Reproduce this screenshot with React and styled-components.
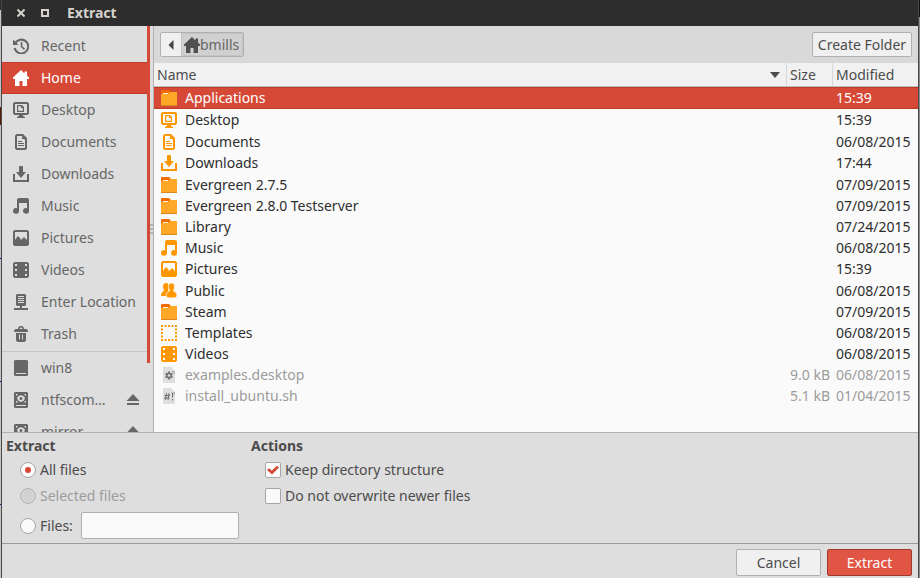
import React, { useState } from "react";
import styled, { createGlobalStyle, css } from "styled-components";

const color = {
  accent: "#d64937",
  accentEdge: "#c03a29",
  panel: "#dedede",
  toolbar: "#d9d9d9",
  edge: "#b0b0b0",
  text: "#4c4c4c",
  soft: "#666666",
  muted: "#9c9c9c",
  base: "#fafafa",
  orange: "#ff9800",
};

const GlobalStyle = createGlobalStyle`
  * { box-sizing: border-box; }
  body {
    margin: 0;
    background:
      linear-gradient(
        #2b2b2b 0 10px, #c4c4c4 10px 107px, #5a1a08 107px 125px, #c4c4c4 125px 258px,
        #1414a8 258px 259px, #c4c4c4 259px 381px, #1414a8 381px 382px, #c4c4c4 382px 504px,
        #38107a 504px 505px, #c4c4c4 505px) left / 1px 100% no-repeat,
      linear-gradient(#101010 0 17px, #8c8c8c 17px);
    font-family: "Noto Sans", sans-serif;
    font-size: 14px;
    line-height: 20px;
    color: ${color.text};
  }
  button, input { font: inherit; color: inherit; margin: 0; }
  h1, h2 { margin: 0; font-size: 14px; font-weight: 700; }
`;

const Window = styled.div`
  display: flex;
  flex-direction: column;
  height: 100vh;
  margin: 0 1px;
  border: solid #484848;
  border-width: 0 1px;
  background: ${color.panel};
  overflow: hidden;
`;

const TitleBar = styled.header`
  display: flex;
  align-items: center;
  height: 26px;
  flex: none;
  padding: 0 11px;
  gap: 8px;
  background: #2d2d2d;
  color: #d6d3cd;
  h1 { margin-left: 6px; }
`;

const WindowButton = styled.button`
  display: flex;
  align-items: center;
  justify-content: center;
  width: 16px;
  height: 16px;
  padding: 0;
  border: 0;
  background: none;
`;

const Browser = styled.div`
  display: flex;
  flex: 1 1 0;
  min-height: 0;
  border-bottom: 1px solid ${color.edge};
`;

const Sidebar = styled.nav`
  display: flex;
  flex: none;
  width: 152px;
  border-right: 1px solid ${color.edge};
  overflow: hidden;
`;

const PlaceList = styled.ul`
  flex: 1;
  min-width: 0;
  margin: 0;
  padding: 4px 0 0;
  list-style: none;
`;

const Place = styled.li`
  display: flex;
  height: 32px;
  color: ${(p) => (p.$active ? "#ffffff" : color.soft)};
  background: ${(p) => (p.$active ? color.accent : "transparent")};
  box-shadow: ${(p) =>
    p.$active ? `inset 0 1px ${color.accentEdge}, inset 0 -1px ${color.accentEdge}` : "none"};
  ${(p) =>
    p.$divided &&
    css`
      height: 33px;
      margin-top: 1px;
      border-top: 1px solid #c6c6c6;
    `}
`;

const PlaceLink = styled.a`
  display: flex;
  flex: 1;
  min-width: 0;
  align-items: center;
  gap: 12px;
  padding-left: 11px;
  color: inherit;
  text-decoration: none;
  white-space: nowrap;
`;

const EjectButton = styled.button`
  flex: none;
  width: 36px;
  padding: 0 6px 0 14px;
  border: 0;
  background: none;
  svg { display: block; }
`;

const ScrollThumb = styled.div`
  flex: none;
  width: 3px;
  height: 337px;
  background: ${color.accent};
`;

const Grip = styled.div`
  flex: none;
  align-self: center;
  width: 3px;
  height: 10px;
  background: repeating-linear-gradient(#b4b4b4 0 2px, transparent 2px 4px);
`;

const Main = styled.main`
  display: flex;
  flex: 1;
  min-width: 0;
  flex-direction: column;
  background: ${color.base};
  overflow: hidden;
`;

const Toolbar = styled.div`
  display: flex;
  flex: none;
  align-items: center;
  justify-content: space-between;
  height: 37px;
  padding: 0 6px;
  background: ${color.toolbar};
`;

const buttonBox = css`
  border: 1px solid ${color.edge};
  border-radius: 2px;
  background: #f0f0f0;
`;

const PathBar = styled.div`
  display: flex;
  height: 25px;
  ${buttonBox}
  overflow: hidden;
`;

const PathButton = styled.button`
  display: flex;
  align-items: center;
  justify-content: center;
  padding: 0 4px 0 3px;
  min-width: 20px;
  border: 0;
  color: ${color.soft};
  background: ${(p) => (p.$current ? "#d0d0d0" : "transparent")};
  box-shadow: ${(p) => (p.$current ? "inset 0 0 0 1px #c4c4c4" : "none")};
`;

const Button = styled.button`
  ${buttonBox}
  height: ${(p) => (p.$dialog ? 27 : 25)}px;
  min-width: ${(p) => (p.$dialog ? 85 : 100)}px;
  padding: 0 3px;
  white-space: nowrap;
  ${(p) =>
    p.$primary &&
    css`
      color: #ffffff;
      background: #e15545;
      border-color: #9f3a2d;
    `}
`;

const FileTable = styled.table`
  width: 100%;
  table-layout: fixed;
  border-collapse: separate;
  border-spacing: 0;
  white-space: nowrap;
  th, td { padding: 0 3px; text-align: left; }
`;

const HeadCell = styled.th`
  width: ${(p) => p.$width || "auto"};
  height: 24px;
  font-weight: 400;
  background: #f1f1f1;
  border-bottom: 1px solid #bdbdbd;
  border-left: ${(p) => (p.$width ? "1px solid #d8d8d8" : "0")};
`;

const SortButton = styled.button`
  display: flex;
  align-items: center;
  justify-content: space-between;
  width: 100%;
  height: 23px;
  padding: 0;
  padding-right: ${(p) => (p.$sorted ? 3 : 0)}px;
  border: 0;
  background: none;
`;

const FileRow = styled.tr`
  height: ${(p) => (p.$tall ? 22 : 21)}px;
  color: ${(p) => (p.$selected ? "#ffffff" : p.$muted ? color.muted : "#2e2e2e")};
  td {
    background: ${(p) => (p.$selected ? color.accent : "transparent")};
    box-shadow: ${(p) =>
      p.$selected ? `inset 0 1px ${color.accentEdge}, inset 0 -1px ${color.accentEdge}` : "none"};
  }
  td:nth-child(2) { text-align: right; padding: 0 2px 0 0; }
  td:nth-child(3) { padding-left: 4px; }
`;

const FileName = styled.div`
  display: flex;
  align-items: center;
  gap: 8px;
  height: 20px;
  padding-left: 4px;
`;

const Options = styled.div`
  display: grid;
  flex: none;
  grid-template-columns: 245px 1fr;
  padding: 3px 4px 2px;
`;

const OptionGroup = styled.section`
  display: flex;
  flex-direction: column;
  gap: 2px;
`;

const OptionRow = styled.div`
  display: flex;
  align-items: center;
  gap: 4px;
  height: ${(p) => (p.$field ? 31 : 24)}px;
  padding-left: 14px;
  color: ${(p) => (p.$disabled ? color.muted : "inherit")};
`;

const choice = css`
  appearance: none;
  display: grid;
  place-items: center;
  flex: none;
  width: 16px;
  height: 16px;
  border: 1px solid #a6a6a6;
  background: ${color.base};
`;

const Radio = styled.input.attrs({ type: "radio" })`
  ${choice}
  border-radius: 50%;
  &:disabled { background: #d2d2d2; border-color: #b4b4b4; }
  &:checked::after {
    content: "";
    width: 6px;
    height: 6px;
    border-radius: 50%;
    background: ${color.accent};
  }
`;

const CheckBox = styled.input.attrs({ type: "checkbox" })`
  ${choice}
  border-radius: 2px;
  &:checked::after {
    content: "";
    width: 12px;
    height: 10px;
    background: ${color.accent};
    clip-path: polygon(0 50%, 17% 32%, 40% 56%, 82% 8%, 100% 26%, 42% 96%);
  }
`;

const TextField = styled.input`
  width: 158px;
  height: 27px;
  margin-left: 4px;
  padding: 0 6px;
  border: 1px solid ${color.edge};
  border-radius: 2px;
  background: ${color.base};
`;

const ActionBar = styled.footer`
  display: flex;
  flex: none;
  justify-content: flex-end;
  gap: 6px;
  padding: 5px 6px 2px;
  border-top: 1px solid #9a9a9a;
`;

const IconSvg = styled.svg`
  flex: none;
  display: block;
  color: ${(p) => p.$tint || "inherit"};
`;

const shapes = {
  recent: (
    <g fill="none" stroke="currentColor">
      <path d="M2.2 5.4A6.9 6.9 0 1 1 1.6 10" strokeWidth="2" />
      <path d="M8.5 4v4.5l3 2.8" strokeWidth="1.6" />
      <path d="M0 1.5V7h5.5z" fill="currentColor" stroke="none" />
    </g>
  ),
  home: <path d="M8 0 0 7.5V9h2v7h4.5v-5h3v5H14V9h2V7.5l-2-2V1.5h-2.5v2z" />,
  desktop: (
    <>
      <path fillRule="evenodd" d="M1.5 0h13L16 1.5v10L14.5 13h-13L0 11.5v-10zM2 2v9h12V2z" />
      <path fillRule="evenodd" d="M4 3h5l2 2v5H4zM5.2 4.2v4.6h4.6V6H8V4.2z" />
      <path d="M6 13h4v1l2 1v1H4v-1l2-1z" />
    </>
  ),
  documents: (
    <>
      <path fillRule="evenodd" d="M3.5 0H10l4 4v10.5L12.5 16h-9L2 14.5v-13zM4 2v12h8V6L9 2z" />
      <path d="M5 7h4v1H5zM5 9h6v1H5zM5 11h6v1H5zM9 2v3h3z" />
    </>
  ),
  downloads: <path d="M6 1q0-1 1-1h2q1 0 1 1v5h3l-5 6-5-6h3zM0 8h2v6h12V8h2v8H0z" />,
  music: <path d="M4 2q0-2 2-2h8q2 0 2 2v11a3 2.8 0 1 1-2-2.7V5H6v8a3 2.8 0 1 1-2-2.7z" />,
  pictures: (
    <path
      fillRule="evenodd"
      d="M1.5 0h13L16 1.5v13l-1.5 1.5h-13L0 14.5v-13zM2 2v8l2-3 1-1 2 2 1 2 1-1 2-2 1 1 2 2V2z"
    />
  ),
  videos: (
    <path
      fillRule="evenodd"
      d="M1.5 0h13L16 1.5v13l-1.5 1.5h-13L0 14.5v-13zM2 2v2h2V2zM2 7v2h2V7zM2 12v2h2v-2zM12 2v2h2V2zM12 7v2h2V7zM12 12v2h2v-2z"
    />
  ),
  network: (
    <path
      fillRule="evenodd"
      d="M4 0h8l1 1v10l-1 1H9v2h6v2H1v-2h6v-2H4l-1-1V1zM5 2v1h6V2zM5 4v1h6V4zM5 6v1h6V6zM5 8v1h6V8z"
    />
  ),
  trash: (
    <path
      fillRule="evenodd"
      d="M5 3q0-3 3-3t3 3h2q2 0 2 3H1q0-3 2-3zM6.5 3h3q0-1.5-1.5-1.5T6.5 3zM3 7h10v7.5L11.5 16h-7L3 14.5zM6 8.5v5h1v-5zM9 8.5v5h1v-5z"
    />
  ),
  drive: <path fillRule="evenodd" d="M2 0h12l1 1v14l-1 1H2l-1-1V1zM3 13v1h10v-1z" />,
  disk: (
    <path
      fillRule="evenodd"
      d="M2 0h12l1 1v14l-1 1H2l-1-1V1zM3 13v1h10v-1zM3 2v1.5h1.5V2zM11.5 2v1.5H13V2zM3 9v1.5h1.5V9zM11.5 9v1.5H13V9zM5 4.5 4 6l1 2.5L8 10l3-1.5L12 6l-1-1.5L8 3zM8 5a1.5 1.5 0 1 1 0 3 1.5 1.5 0 0 1 0-3z"
    />
  ),
  eject: <path d="M8 2 1.5 9h13zM2 11h12v2H2z" />,
  folder: (
    <>
      <path fill="#ef6c00" d="M0 1q0-1 1-1h7l2 2v3H0z" />
      <path fill="#ffa726" d="M0 4h7l2-2h7v13H0z" />
      <path fill="#fff3e0" d="M2 3h5v1H2z" />
      <path fill="#d98919" d="M0 15h16v1H0z" />
    </>
  ),
  people: (
    <>
      <path d="M5 0q3 0 3 4L7 7l1 2-2 4H0q0-4 3-5L2 4q0-4 3-4z" />
      <path
        d="M10.5 0q3.5 0 3.2 4l-1.2 4q3.5 1 3.5 5 0 2-5.5 2T5 13q0-4 3.5-5L7.3 4Q7 0 10.5 0z"
        stroke={color.base}
        strokeWidth=".7"
      />
    </>
  ),
  templates: (
    <path
      fill="none"
      stroke="currentColor"
      strokeWidth="2"
      strokeDasharray="2 1.5"
      d="M0 1h16M0 15h16M1 3.5v9M15 3.5v9"
    />
  ),
  config: (
    <>
      <path fill="#dedede" d="M2 0h8l4 4v12H2z" />
      <path fill="#b8b8b8" d="M10 4h4v4z" />
      <path stroke="#777" strokeWidth="2" fill="none" d="M8 4.5v8M4.5 6.5l7 4M11.5 6.5l-7 4" />
      <circle cx="8" cy="8.5" r="3" fill="#777" />
      <circle cx="8" cy="8.5" r="1.2" fill="#dedede" />
    </>
  ),
  script: (
    <>
      <path fill="#dedede" d="M2 0h8l4 4v12H2z" />
      <path fill="#b8b8b8" d="M10 4h4v4z" />
      <path
        stroke="#707070"
        fill="none"
        d="M5.5 5 4.5 12M8 5 7 12M3.5 7.5h5.5M3 10h5.5M11.5 5v4.5M11.5 11v1.5"
      />
    </>
  ),
};

function Icon({ name, tint }) {
  return (
    <IconSvg width="16" height="16" viewBox="0 0 16 16" fill="currentColor" $tint={tint} aria-hidden="true">
      {shapes[name]}
    </IconSvg>
  );
}

const places = [
  { name: "Recent", icon: "recent" },
  { name: "Home", icon: "home", active: true },
  { name: "Desktop", icon: "desktop" },
  { name: "Documents", icon: "documents" },
  { name: "Downloads", icon: "downloads" },
  { name: "Music", icon: "music" },
  { name: "Pictures", icon: "pictures" },
  { name: "Videos", icon: "videos" },
  { name: "Enter Location", icon: "network" },
  { name: "Trash", icon: "trash" },
  { name: "win8", icon: "drive", divided: true },
  { name: "ntfscom…", icon: "disk", eject: true },
  { name: "mirror", icon: "disk", eject: true },
];

const files = [
  { name: "Applications", icon: "folder", date: "15:39", tall: true },
  { name: "Desktop", icon: "desktop", date: "15:39", tall: true },
  { name: "Documents", icon: "documents", date: "06/08/2015" },
  { name: "Downloads", icon: "downloads", date: "17:44", tall: true },
  { name: "Evergreen 2.7.5", icon: "folder", date: "07/09/2015" },
  { name: "Evergreen 2.8.0 Testserver", icon: "folder", date: "07/09/2015" },
  { name: "Library", icon: "folder", date: "07/24/2015" },
  { name: "Music", icon: "music", date: "06/08/2015" },
  { name: "Pictures", icon: "pictures", date: "15:39", tall: true },
  { name: "Public", icon: "people", date: "06/08/2015" },
  { name: "Steam", icon: "folder", date: "07/09/2015" },
  { name: "Templates", icon: "templates", date: "06/08/2015" },
  { name: "Videos", icon: "videos", date: "06/08/2015" },
  { name: "examples.desktop", icon: "config", size: "9.0 kB", date: "06/08/2015", muted: true },
  { name: "install_ubuntu.sh", icon: "script", size: "5.1 kB", date: "01/04/2015", muted: true },
];

export default function App() {
  const [selected, setSelected] = useState("Applications");
  const [scope, setScope] = useState("all");
  return (
    <>
      <GlobalStyle />
      <Window>
        <TitleBar>
          <WindowButton aria-label="Close">
            <svg width="8" height="8" viewBox="0 0 8 8" stroke="currentColor" strokeWidth="2">
              <path d="M.5.5l7 7M7.5.5l-7 7" />
            </svg>
          </WindowButton>
          <WindowButton aria-label="Maximize">
            <svg width="8" height="8" viewBox="0 0 8 8" fill="none" stroke="currentColor" strokeWidth="2">
              <path d="M1 1h6v6H1z" />
            </svg>
          </WindowButton>
          <h1>Extract</h1>
        </TitleBar>

        <Browser>
          <Sidebar aria-label="Places">
            <PlaceList>
              {places.map((place) => (
                <Place key={place.name} $active={place.active} $divided={place.divided}>
                  <PlaceLink href="#">
                    <Icon name={place.icon} />
                    {place.name}
                  </PlaceLink>
                  {place.eject && (
                    <EjectButton aria-label={`Eject ${place.name}`}>
                      <Icon name="eject" />
                    </EjectButton>
                  )}
                </Place>
              ))}
            </PlaceList>
            <ScrollThumb />
            <Grip />
          </Sidebar>

          <Main>
            <Toolbar>
              <PathBar>
                <PathButton aria-label="Back">
                  <svg width="6" height="10" viewBox="0 0 6 10" fill="#444">
                    <path d="M5.5 0v10L.5 5z" />
                  </svg>
                </PathButton>
                <PathButton $current>
                  <Icon name="home" tint="#505050" />
                  bmills
                </PathButton>
              </PathBar>
              <Button>Create Folder</Button>
            </Toolbar>
            <FileTable>
              <thead>
                <tr>
                  <HeadCell>
                    <SortButton $sorted>
                      Name
                      <svg width="10" height="6" viewBox="0 0 10 6" fill={color.text}>
                        <path d="M0 0h10L5 6z" />
                      </svg>
                    </SortButton>
                  </HeadCell>
                  <HeadCell $width="46px">
                    <SortButton>Size</SortButton>
                  </HeadCell>
                  <HeadCell $width="86px">
                    <SortButton>Modified</SortButton>
                  </HeadCell>
                </tr>
              </thead>
              <tbody>
                {files.map((file) => (
                  <FileRow
                    key={file.name}
                    $tall={file.tall}
                    $muted={file.muted}
                    $selected={file.name === selected}
                    onClick={() => setSelected(file.name)}
                  >
                    <td>
                      <FileName>
                        <Icon name={file.icon} tint={color.orange} />
                        {file.name}
                      </FileName>
                    </td>
                    <td>{file.size}</td>
                    <td>{file.date}</td>
                  </FileRow>
                ))}
              </tbody>
            </FileTable>
          </Main>
        </Browser>

        <Options>
          <OptionGroup>
            <h2>Extract</h2>
            <OptionRow>
              <Radio id="all" name="scope" checked={scope === "all"} onChange={() => setScope("all")} />
              <label htmlFor="all">All files</label>
            </OptionRow>
            <OptionRow $disabled>
              <Radio id="selected" name="scope" disabled />
              <label htmlFor="selected">Selected files</label>
            </OptionRow>
            <OptionRow $field>
              <Radio id="some" name="scope" checked={scope === "some"} onChange={() => setScope("some")} />
              <label htmlFor="some">Files:</label>
              <TextField type="text" aria-label="Files" />
            </OptionRow>
          </OptionGroup>
          <OptionGroup>
            <h2>Actions</h2>
            <OptionRow>
              <CheckBox id="keep" defaultChecked />
              <label htmlFor="keep">Keep directory structure</label>
            </OptionRow>
            <OptionRow>
              <CheckBox id="newer" />
              <label htmlFor="newer">Do not overwrite newer files</label>
            </OptionRow>
          </OptionGroup>
        </Options>

        <ActionBar>
          <Button $dialog>Cancel</Button>
          <Button $dialog $primary>
            Extract
          </Button>
        </ActionBar>
      </Window>
    </>
  );
}
